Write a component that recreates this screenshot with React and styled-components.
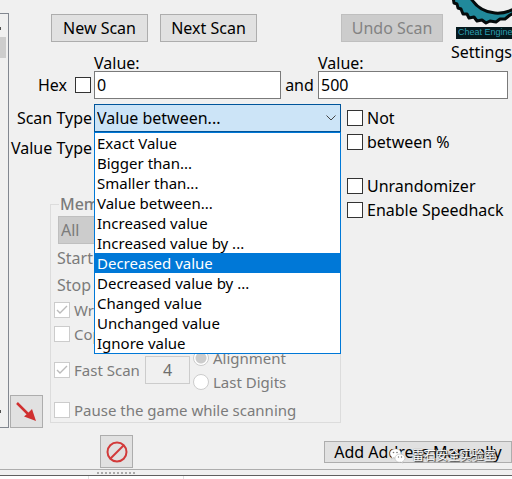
import React, { useState } from "react";
import styled, { createGlobalStyle } from "styled-components";

const GlobalStyle = createGlobalStyle`
  *, *::before, *::after { box-sizing: border-box; }
  body { margin: 0; background: #f0f0f0; overflow: hidden; }
  body, button, input, select {
    font-family: "Noto Sans", "Noto Sans CJK SC", sans-serif;
    font-size: 16px;
    line-height: 20px;
    color: #000;
  }
`;

const Page = styled.main`
  position: relative;
  background: #f0f0f0;
`;

const Workspace = styled.div`
  display: flex;
`;

const ResultsEdge = styled.aside`
  width: 9px;
  flex: none;
  margin-top: 13px;
  padding: 13px 0 14px;
  display: flex;
  flex-direction: column;
  border: 1px solid #828790;
  border-left: 0;
`;

const ScrollTick = styled.span`
  width: 1px;
  height: 3px;
  background: #505050;
`;

const ScrollThumb = styled.span`
  width: 6px;
  height: 21px;
  margin: 7px 0 auto;
  background: #cdcdcd;
`;

const Panel = styled.div`
  flex: 1;
  min-width: 0;
`;

const Header = styled.header`
  display: flex;
  height: 54px;
`;

const ScanButtons = styled.div`
  flex: 1;
  display: flex;
  gap: 12px;
  padding: 14px 8px 0 42px;
`;

const Button = styled.button`
  width: ${(p) => p.$width || 97}px;
  height: ${(p) => p.$height || 28}px;
  margin: 0;
  margin-left: ${(p) => (p.$end ? "auto" : "0")};
  padding: 0;
  display: flex;
  align-items: center;
  justify-content: center;
  flex: none;
  white-space: nowrap;
  background: #e1e1e1;
  border: 1px solid #adadad;
  &:disabled { background: #ccc; border-color: #bfbfbf; color: #838383; }
`;

const SettingsLink = styled.a`
  width: 61px;
  flex: none;
  display: flex;
  flex-direction: column;
  color: #000;
  text-decoration: none;
  white-space: nowrap;
`;

const Emblem = styled.svg`
  display: block;
  height: 27px;
  flex: none;
`;

const Brand = styled.span`
  height: 12px;
  margin: 0 0 3px 5px;
  padding-left: 2px;
  background: #06191d;
  color: #2b9db0;
  font: 9px/11px "Liberation Sans", sans-serif;
  flex: none;
`;

const ValueGrid = styled.div`
  display: grid;
  grid-template-columns: 85px 187px 37px 1fr;
  grid-template-rows: 17px 28px;
  padding-right: 4px;
  align-items: center;
`;

const ValueLabel = styled.label`
  grid-column: ${(p) => p.$column};
  line-height: 16px;
`;

const HexLabel = styled.label`
  display: flex;
  justify-content: flex-end;
  align-items: center;
  gap: 8px;
  padding-right: 3px;
`;

const Joiner = styled.span`
  text-align: center;
`;

const TextBox = styled.input`
  width: 100%;
  min-width: 0;
  height: 28px;
  padding: 0 2px;
  border: 1px solid #7a7a7a;
  background: #fff;
  &:disabled {
    width: 45px;
    text-align: center;
    background: #f0f0f0;
    border-color: #ccc;
    color: #6d6d6d;
  }
`;

const Tick = styled.input`
  appearance: none;
  width: 16px;
  height: 16px;
  flex: none;
  margin: 0;
  border: 1px solid #333;
  background: #fff;
  &[type="radio"] { border-radius: 50%; }
  &:disabled { border-color: #ccc; }
  &[type="radio"]:checked { background: radial-gradient(circle, #ccc 5px, #fff 6px); }
  &[type="checkbox"]:checked {
    background: #fff url("data:image/svg+xml,%3Csvg xmlns='http://www.w3.org/2000/svg' viewBox='0 0 14 14'%3E%3Cpath d='M2 7l3 3 7-7' fill='none' stroke='%23bbb' stroke-width='1.4'/%3E%3C/svg%3E") center / 14px;
  }
`;

const TickLabel = styled.label`
  display: flex;
  align-items: center;
  gap: 4px;
  height: 24px;
  white-space: nowrap;
  font-size: ${(p) => (p.$muted ? 15 : 16)}px;
  color: ${(p) => (p.$muted ? "#7b7b7b" : "#000")};
`;

const Options = styled.div`
  display: grid;
  grid-template-columns: 332px 1fr;
  margin-top: 5px;
`;

const FieldRow = styled.div`
  display: grid;
  grid-template-columns: 85px 1fr;
  align-items: center;
  height: ${(p) => p.$height}px;
`;

const FieldLabel = styled.label`
  padding-right: 2px;
  text-align: right;
  white-space: nowrap;
`;

const Combo = styled.div`
  position: relative;
  display: grid;
  grid-template-columns: 1fr;
  align-items: center;
`;

const Select = styled.select`
  appearance: none;
  grid-area: 1 / 1;
  width: 100%;
  height: 28px;
  padding: 0 2px;
  border: 1px solid #00559b;
  border-radius: 0;
  background: #cce4f7;
  &:disabled { border-color: #bfbfbf; background: #ccc; color: #7b7b7b; opacity: 1; }
`;

const Chevron = styled.svg`
  grid-area: 1 / 1;
  justify-self: end;
  width: 10px;
  height: 6px;
  margin-right: 5px;
  pointer-events: none;
  z-index: 1;
`;

const Menu = styled.ul`
  position: absolute;
  z-index: 3;
  top: 100%;
  left: 0;
  right: 0;
  margin: 0;
  padding: 0;
  list-style: none;
  font-size: 15px;
  background: #fff;
  border: 1px solid #0078d7;
`;

const MenuItem = styled.li`
  height: 20px;
  padding-left: 2px;
  white-space: nowrap;
  background: ${(p) => (p.$active ? "#0078d7" : "#fff")};
  color: ${(p) => (p.$active ? "#fff" : "#000")};
`;

const Checks = styled.div`
  padding: 2px 0 0 6px;
`;

const CheckGroup = styled.div`
  margin-bottom: 20px;
`;

const MemoryRow = styled.div`
  display: flex;
  gap: 7px;
  padding: 30px 0 0 1px;
`;

const ArrowSlot = styled.div`
  display: flex;
  align-items: flex-end;
`;

const MemoryBox = styled.fieldset`
  flex: 1;
  min-width: 0;
  margin: 0 0 5px;
  padding: 2px 3px 0;
  border: 1px solid #dcdcdc;
  color: #7b7b7b;
`;

const Legend = styled.legend`
  margin-left: 5px;
  padding: 0 2px 0 1px;
  font-weight: 500;
`;

const MemorySelect = styled.div`
  padding: 0 5px 0 4px;
`;

const RangeLine = styled.div`
  height: 27px;
  padding: 4px 0 0 3px;
`;

const FastRow = styled.div`
  display: flex;
  align-items: center;
  height: 47px;
  margin-bottom: 5px;
  gap: 3px;
`;

const FastCheck = styled.div`
  width: 88px;
`;

const BottomRow = styled.div`
  display: flex;
  align-items: center;
  justify-content: space-between;
  height: 41px;
  padding: 6px 0 0 100px;
`;

const Splitter = styled.div`
  height: 6px;
  padding: 2px 0 0 97px;
  border-top: 1px solid #adadad;
`;

const Grip = styled.div`
  width: 38px;
  height: 2px;
  background: repeating-linear-gradient(90deg, #aaa 0 2px, #f0f0f0 2px 4px);
`;

const AddressHeader = styled.div`
  height: 4px;
  display: grid;
  grid-template-columns: 89px 95px 1fr;
  background: #fff;
  border-top: 1px solid #606060;
`;

const HeaderCell = styled.span`
  border-right: 1px solid #e0e0e0;
`;

const Watermark = styled.div`
  position: absolute;
  right: 16px;
  bottom: 13px;
  display: flex;
  align-items: center;
  gap: 6px;
  color: #fff;
  font-size: 12px;
  line-height: 20px;
  white-space: nowrap;
  font-size: 12px;
  text-shadow: 1px 1px 1px #333, 0 0 1px #555;
  pointer-events: none;
`;

const WatermarkText = styled.span`
  font-size: 12px;
`;

const scanTypes = [
  "Exact Value", "Bigger than...", "Smaller than...", "Value between...",
  "Increased value", "Increased value by ...", "Decreased value",
  "Decreased value by ...", "Changed value", "Unchanged value", "Ignore value",
];

function Check({ label, type = "checkbox", muted, ...rest }) {
  return (
    <TickLabel $muted={muted}>
      <Tick type={type} disabled={muted} {...rest} />
      {label}
    </TickLabel>
  );
}

function ScanTypeField() {
  const [value, setValue] = useState("Value between...");
  const [active, setActive] = useState("Decreased value");
  return (
    <FieldRow $height={28}>
      <FieldLabel htmlFor="scan-type">Scan Type</FieldLabel>
      <Combo>
        <Select id="scan-type" value={value} onChange={(e) => setValue(e.target.value)}>
          {scanTypes.map((t) => <option key={t}>{t}</option>)}
        </Select>
        <Chevron viewBox="0 0 10 6" aria-hidden="true">
          <path d="M.5 .5 5 5 9.500 .5" fill="none" stroke="#444" />
        </Chevron>
        <Menu role="listbox" aria-label="Scan Type">
          {scanTypes.map((t) => (
            <MenuItem
              key={t}
              role="option"
              aria-selected={t === active}
              $active={t === active}
              onMouseEnter={() => setActive(t)}
              onClick={() => setValue(t)}
            >
              {t}
            </MenuItem>
          ))}
        </Menu>
      </Combo>
    </FieldRow>
  );
}

export default function App() {
  return (
    <>
      <GlobalStyle />
      <Page>
        <Workspace>
          <ResultsEdge>
            <ScrollTick />
            <ScrollThumb />
            <ScrollTick />
          </ResultsEdge>
          <Panel>
            <Header>
              <ScanButtons>
                <Button>New Scan</Button>
                <Button>Next Scan</Button>
                <Button $width={102} $end disabled>Undo Scan</Button>
              </ScanButtons>
              <SettingsLink href="#settings">
                <Emblem viewBox="0 0 61 27" preserveAspectRatio="xMinYMin slice" aria-hidden="true">
                  <path
                    d="M2-3 3 3 6 4 7 8 10 9 12 14 16 14 18 18 23 17 26 21 31 20 35 23 39 21 45 22 49 19 54 19 59 15 65 12 65 8Q54 14 44 13 28 12 19-3Z"
                    fill="#21899b"
                    stroke="#050b0c"
                    strokeWidth="3"
                    strokeLinejoin="round"
                  />
                </Emblem>
                <Brand>Cheat Engine</Brand>
                Settings
              </SettingsLink>
            </Header>

            <ValueGrid>
              <ValueLabel $column={2} htmlFor="low">Value:</ValueLabel>
              <ValueLabel $column={4} htmlFor="high">Value:</ValueLabel>
              <HexLabel>Hex<Tick type="checkbox" /></HexLabel>
              <TextBox id="low" defaultValue="0" />
              <Joiner>and</Joiner>
              <TextBox id="high" defaultValue="500" />
            </ValueGrid>

            <Options>
              <div>
                <ScanTypeField />
                <FieldRow $height={32}>
                  <FieldLabel as="span">Value Type</FieldLabel>
                </FieldRow>
                <MemoryRow>
                  <ArrowSlot>
                    <Button $width={33} $height={33} aria-label="Add selected address">
                      <svg width="21" height="21" viewBox="0 0 21 21" aria-hidden="true">
                        <path d="M1 2 12 13" stroke="#d03030" strokeWidth="2.500" />
                        <path d="M20 20 8 15.500 11 13 13 11 16 8Z" fill="#d03030" />
                      </svg>
                    </Button>
                  </ArrowSlot>
                  <MemoryBox disabled>
                    <Legend>Memory Scan Options</Legend>
                    <MemorySelect>
                      <Select aria-label="Memory region" defaultValue="All"><option>All</option></Select>
                    </MemorySelect>
                    <RangeLine>Start</RangeLine>
                    <RangeLine>Stop</RangeLine>
                    <Check label="Writable" muted defaultChecked />
                    <Check label="CopyOnWrite" muted />
                    <FastRow>
                      <FastCheck><Check label="Fast Scan" muted defaultChecked /></FastCheck>
                      <TextBox aria-label="Alignment size" defaultValue="4" disabled />
                      <div>
                        <Check label="Alignment" type="radio" name="align" muted defaultChecked />
                        <Check label="Last Digits" type="radio" name="align" muted />
                      </div>
                    </FastRow>
                    <Check label="Pause the game while scanning" muted />
                  </MemoryBox>
                </MemoryRow>
              </div>
              <Checks>
                <CheckGroup>
                  <Check label="Not" />
                  <Check label="between %" />
                </CheckGroup>
                <CheckGroup>
                  <Check label="Unrandomizer" />
                  <Check label="Enable Speedhack" />
                </CheckGroup>
              </Checks>
            </Options>
          </Panel>
        </Workspace>

        <BottomRow>
          <Button $width={33} $height={33} aria-label="Clear list">
            <svg width="22" height="22" viewBox="0 0 22 22" aria-hidden="true">
              <g fill="none" stroke="#d23a3a" strokeWidth="2">
                <circle cx="11" cy="11" r="9.500" />
                <path d="M4 18 18 4" />
              </g>
            </svg>
          </Button>
          <Button $width={188} $height={22}>Add Address Manually</Button>
        </BottomRow>
        <Splitter><Grip /></Splitter>
        <AddressHeader><HeaderCell /><HeaderCell /></AddressHeader>

        <Watermark>
          <svg width="17" height="16" viewBox="0 0 17 16" aria-hidden="true">
            <g fill="#fff" stroke="#aaa" strokeWidth=".5">
              <path d="M6.500 1C3 1 1 3 1 5.500c0 1.500.8 2.800 2 3.600L2.500 11l2.200-1.200c3.800.9 7.300-1.300 7.300-4.300C12 3 10 1 6.500 1Z" />
              <path d="M11 6c-3 0-5 1.900-5 4.200 0 2.800 2.900 4.600 6 3.900l2 1-.4-1.700c1.500-.8 2.400-1.900 2.400-3.200C16 7.900 14 6 11 6Z" />
            </g>
            <g fill="#777">
              <circle cx="4.500" cy="4.500" r=".8" />
              <circle cx="8" cy="4.500" r=".8" />
              <circle cx="9.500" cy="9" r=".7" />
              <circle cx="12.500" cy="9" r=".7" />
            </g>
          </svg>
          <WatermarkText>雷石安全实验室</WatermarkText>
        </Watermark>
      </Page>
    </>
  );
}
